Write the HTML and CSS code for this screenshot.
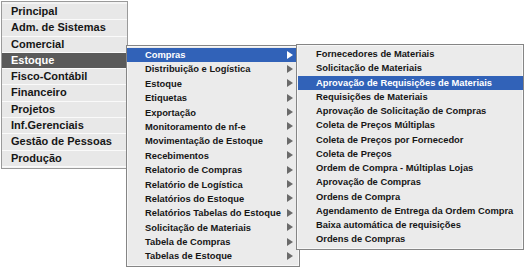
FILE: index.html
```html
<!DOCTYPE html>
<html lang="pt-BR">
<head>
    <meta charset="UTF-8">
    <title>Menu Estoque</title>
    <link rel="stylesheet" href="styles.css">
</head>
<body>
    <div class="menu-area">
        <ul class="menu main-menu">
            <li>Principal</li>
            <li>Adm. de Sistemas</li>
            <li>Comercial</li>
            <li class="open">Estoque</li>
            <li>Fisco-Contábil</li>
            <li>Financeiro</li>
            <li>Projetos</li>
            <li>Inf.Gerenciais</li>
            <li>Gestão de Pessoas</li>
            <li>Produção</li>
        </ul>

        <ul class="menu sub-menu estoque-menu">
            <li class="has-sub open">Compras</li>
            <li class="has-sub">Distribuição e Logística</li>
            <li class="has-sub">Estoque</li>
            <li class="has-sub">Etiquetas</li>
            <li class="has-sub">Exportação</li>
            <li class="has-sub">Monitoramento de nf-e</li>
            <li class="has-sub">Movimentação de Estoque</li>
            <li class="has-sub">Recebimentos</li>
            <li class="has-sub">Relatorio de Compras</li>
            <li class="has-sub">Relatório de Logística</li>
            <li class="has-sub">Relatórios do Estoque</li>
            <li class="has-sub">Relatórios Tabelas do Estoque</li>
            <li class="has-sub">Solicitação de Materiais</li>
            <li class="has-sub">Tabela de Compras</li>
            <li class="has-sub">Tabelas de Estoque</li>
        </ul>

        <ul class="menu sub-menu compras-menu">
            <li>Fornecedores de Materiais</li>
            <li>Solicitação de Materiais</li>
            <li class="open">Aprovação de Requisições de Materiais</li>
            <li>Requisições de Materiais</li>
            <li>Aprovação de Solicitação de Compras</li>
            <li>Coleta de Preços Múltiplas</li>
            <li>Coleta de Preços por Fornecedor</li>
            <li>Coleta de Preços</li>
            <li>Ordem de Compra - Múltiplas Lojas</li>
            <li>Aprovação de Compras</li>
            <li>Ordens de Compra</li>
            <li>Agendamento de Entrega da Ordem Compra</li>
            <li>Baixa automática de requisições</li>
            <li>Ordens de Compras</li>
        </ul>
    </div>
</body>
</html>
```

FILE: styles.css
```css
html, body {
    height: 100%;
}

body {
    margin: 0;
    background-color: #fff;
    font-family: "Liberation Sans", Arial, sans-serif;
    font-weight: bold;
    color: #161616;
}

.menu-area {
    position: relative;
    height: 269px;
    padding: 1px;
    box-sizing: border-box;
}

.menu {
    list-style: none;
    margin: 0;
    box-sizing: border-box;
}

.main-menu {
    width: 127px;
    padding: 2px 0 1px;
    border: 1px solid #9a9a9a;
    background-color: #f4f4f4;
}

.main-menu li {
    height: 15.3px;
    line-height: 15px;
    padding-left: 9px;
    font-size: 11px;
    background-color: #e8e8e8;
    border-bottom: 1px solid #fafafa;
}

.main-menu li.open {
    background-color: #5a5a5a;
    color: #fff;
}

.sub-menu {
    position: absolute;
    padding: 2px 0;
    border: 1px solid #858585;
    background-color: #ebebeb;
    box-shadow: inset 0 0 0 1px #f7f7f7;
}

.sub-menu li {
    position: relative;
    height: 14.4px;
    line-height: 14.4px;
    padding-left: 18px;
    font-size: 9.35px;
}

.sub-menu li.open {
    background-color: #3162b8;
    color: #fff;
}

.estoque-menu {
    left: 126px;
    top: 45px;
    width: 174px;
}

.compras-menu {
    left: 296px;
    top: 44px;
    width: 228px;
    padding-left: 1px;
}

.compras-menu li {
    height: 14.25px;
    line-height: 14.25px;
}

.has-sub::after {
    content: "";
    position: absolute;
    right: 6px;
    top: 2.5px;
    border-left: 6px solid #6a6a6a;
    border-top: 4.5px solid transparent;
    border-bottom: 4.5px solid transparent;
}

.has-sub.open::after {
    border-left-color: #fff;
}
```
